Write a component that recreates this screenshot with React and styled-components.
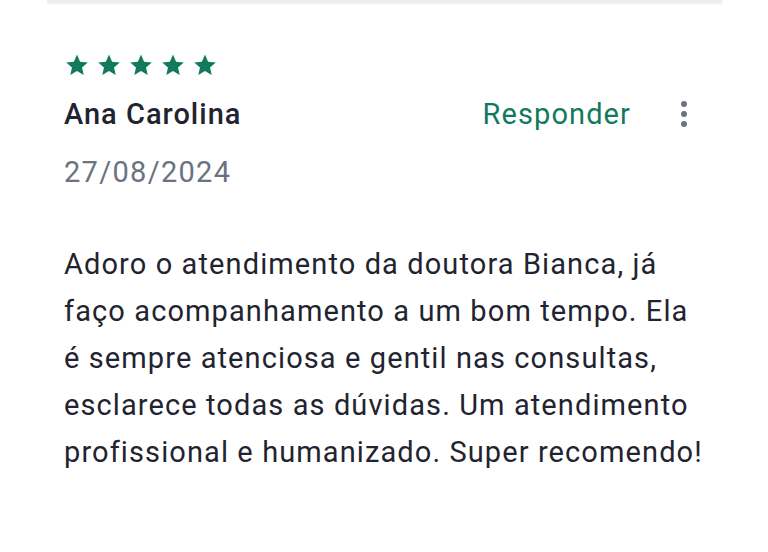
import React from "react";
import styled, { createGlobalStyle } from "styled-components";

const Global = createGlobalStyle`
  html, body { margin: 0; padding: 0; background: #ffffff; }
  body { font-family: Roboto, "Noto Sans", sans-serif; -webkit-font-smoothing: antialiased; }
`;

const Page = styled.div`
  width: 768px;
  height: 552px;
  background: #fff;
  overflow: hidden;
`;

const PrevEdge = styled.div`
  margin: 0 46px 0 47px;
  height: 3px;
  background: #eeeeee;
  box-shadow: 0 1px 2px rgba(0, 0, 0, 0.06);
`;

const Card = styled.article`
  padding: 50px 64px 0 64px;
  display: flex;
  flex-direction: column;
`;

const Stars = styled.div`
  display: flex;
  gap: 8px;
  margin-left: 1px;
  height: 24px;
`;

const Header = styled.div`
  margin-top: 19px;
  display: flex;
  align-items: center;
  justify-content: space-between;
`;

const Name = styled.h3`
  margin: 0;
  font-size: 29px;
  line-height: 36px;
  font-weight: 500;
  letter-spacing: 1px;
  color: #1f2430;
`;

const Actions = styled.div`
  display: flex;
  align-items: center;
  gap: 45px;
  margin-right: 12px;
`;

const Reply = styled.button`
  border: 0;
  background: none;
  padding: 0;
  font-family: inherit;
  font-size: 29px;
  line-height: 36px;
  letter-spacing: 1.1px;
  color: #117a5e;
  cursor: pointer;
`;

const MoreButton = styled.button`
  border: 0;
  background: none;
  padding: 0;
  width: 16px;
  height: 32px;
  display: flex;
  flex-direction: column;
  align-items: center;
  justify-content: center;
  gap: 4px;
`;

const Dot = styled.span`
  width: 6px;
  height: 6px;
  border-radius: 50%;
  background: #6c7280;
`;

const DateText = styled.div`
  margin-top: 22px;
  font-size: 29px;
  line-height: 36px;
  letter-spacing: 1.3px;
  color: #6b7280;
`;

const Body = styled.p`
  margin: 51px 0 0 0;
  width: 642px;
  font-size: 29px;
  line-height: 47px;
  letter-spacing: 1.1px;
  color: #1f2430;
`;

const Star = () => (
  <svg width="24" height="24" viewBox="0 0 24 24">
    <path
      fill="#117a5e"
      d="M12 1.6l3.1 7.1 7.7.7-5.8 5.1 1.7 7.6L12 18.1l-6.7 4 1.7-7.6L1.2 9.4l7.7-.7z"
    />
  </svg>
);

export default function App() {
  return (
    <Page>
      <Global />
      <PrevEdge />
      <Card>
        <Stars>
          {[0, 1, 2, 3, 4].map((i) => (
            <Star key={i} />
          ))}
        </Stars>
        <Header>
          <Name>Ana Carolina</Name>
          <Actions>
            <Reply>Responder</Reply>
            <MoreButton aria-label="Mais opções">
              <Dot />
              <Dot />
              <Dot />
            </MoreButton>
          </Actions>
        </Header>
        <DateText>27/08/2024</DateText>
        <Body>
          Adoro o atendimento da doutora Bianca, já faço acompanhamento a um bom
          tempo. Ela é sempre atenciosa e gentil nas consultas, esclarece todas as
          dúvidas. Um atendimento profissional e humanizado. Super recomendo!
        </Body>
      </Card>
    </Page>
  );
}
